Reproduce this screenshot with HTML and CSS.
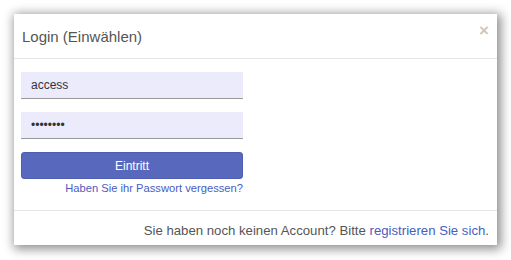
FILE: index.html
```html
<!DOCTYPE html>
<html>
  <head>
    <title>Login</title>
    <meta charset="UTF-8"/>
    <link rel="stylesheet" href="styles.css">
  </head>
  <body>
    <div class="modal">
      <div class="modal-header">
        <h1 class="modal-title">Login (Einwählen)</h1>
        <span class="close">&times;</span>
      </div>
      <div class="modal-body">
        <form class="login-form">
          <input class="field" type="text" value="access">
          <input class="field" type="password" value="password">
          <button class="btn" type="submit">Eintritt</button>
          <a class="forgot" href="#">Haben Sie ihr Passwort vergessen?</a>
        </form>
      </div>
      <div class="modal-footer">
        Sie haben noch keinen Account? Bitte <a href="#">registrieren Sie sich</a>.
      </div>
    </div>
  </body>
</html>
```

FILE: styles.css
```css
body {
  margin: 0;
  padding: 14px;
  background-color: white;
  font-family: "Liberation Sans", Arial, sans-serif;
  color: #333;
}
.modal {
  width: 483px;
  background-color: white;
  box-shadow: 2px 2px 10px 2px rgba(0, 0, 0, 0.45);
}
.modal-header {
  display: flex;
  align-items: center;
  justify-content: space-between;
  height: 44px;
  padding: 0 8px 0 8px;
  border-bottom: 1px solid #e5e5e5;
}
.modal-title {
  margin: 0;
  font-size: 15px;
  font-weight: normal;
  color: #555;
}
.close {
  font-size: 17px;
  font-weight: bold;
  color: #c8c8c8;
  margin-top: -10px;
  margin-right: 0;
}
.modal-body {
  padding: 13px 7px 16px 7px;
}
.login-form {
  display: flex;
  flex-direction: column;
  align-items: flex-end;
  width: 222px;
}
.field {
  box-sizing: border-box;
  width: 222px;
  height: 27px;
  margin: 0 0 13px 0;
  padding: 0 10px;
  border: none;
  border-bottom: 1px solid #999;
  background-color: #ebebfc;
  font-family: "Liberation Sans", Arial, sans-serif;
  font-size: 12px;
  color: #333;
}
.btn {
  width: 222px;
  height: 27px;
  border: 1px solid #4e5fb3;
  border-radius: 3px;
  background-color: #5868bd;
  color: white;
  font-family: "Liberation Sans", Arial, sans-serif;
  font-size: 12px;
}
.forgot {
  margin-top: 3px;
  font-size: 11.2px;
  color: #4a5cbf;
  text-decoration: none;
}
.modal-footer {
  padding: 12px 8px 7px 8px;
  border-top: 1px solid #e5e5e5;
  text-align: right;
  font-size: 13.2px;
  color: #555;
}
.modal-footer a {
  color: #4a5cbf;
  text-decoration: none;
}
```
